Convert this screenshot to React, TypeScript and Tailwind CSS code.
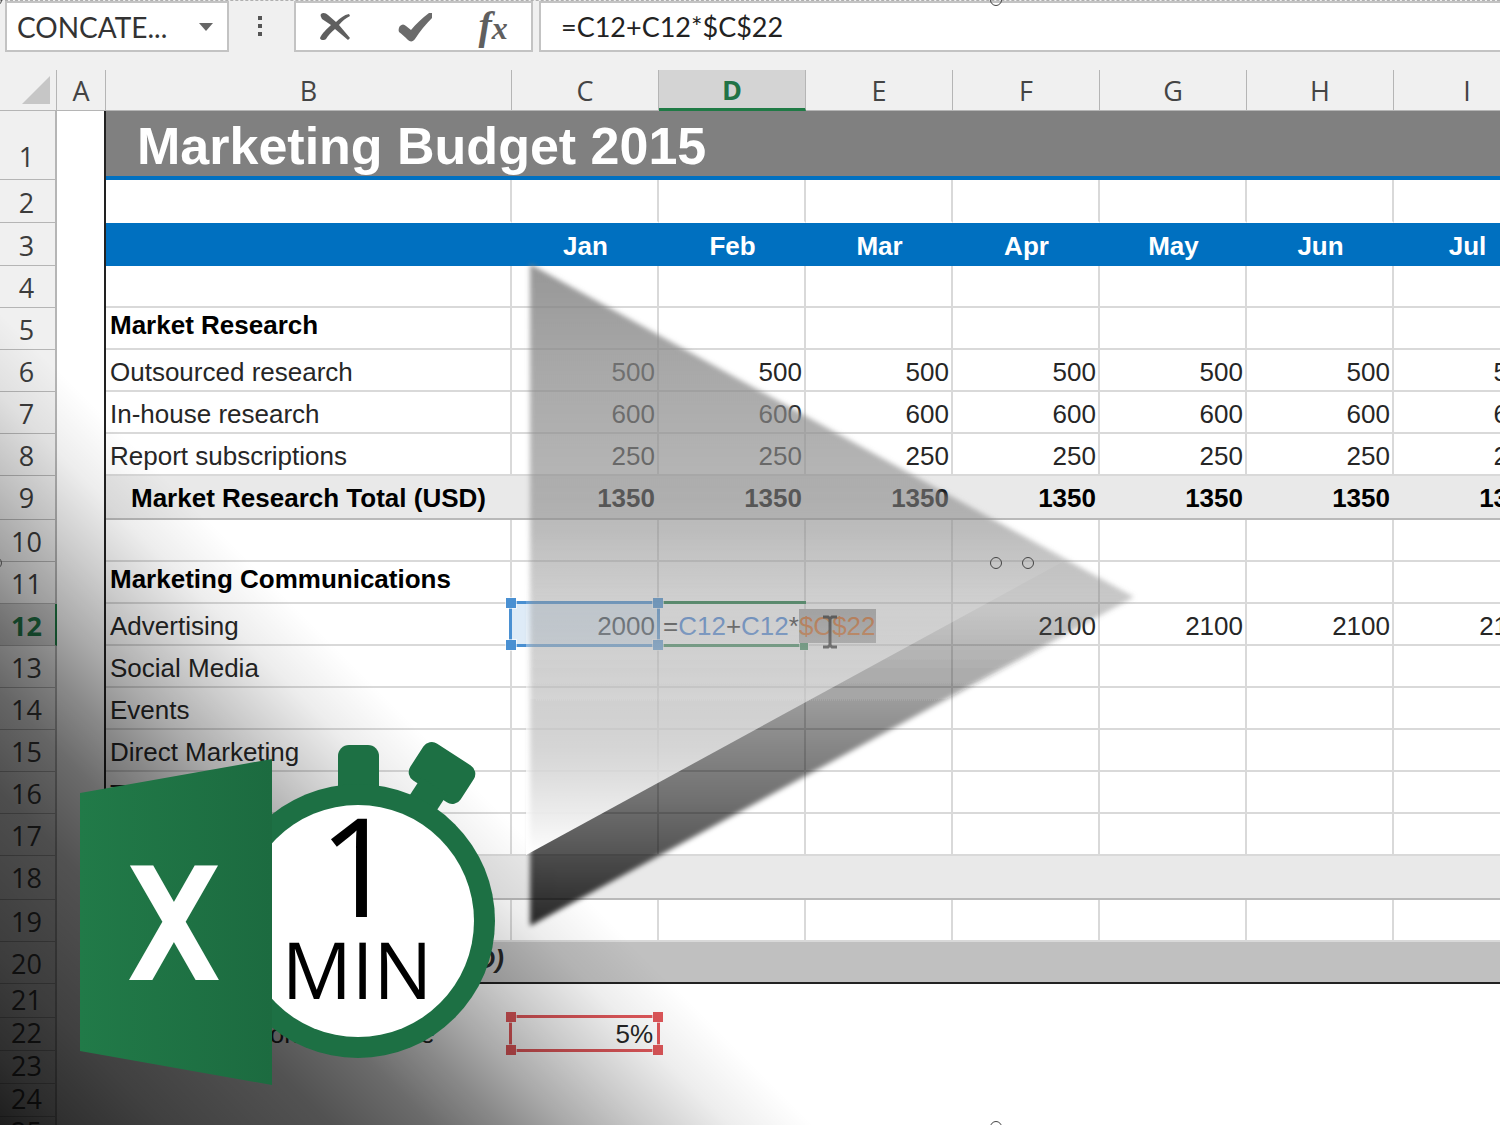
import clsx from "clsx";

type Row = {
  n: number;
  height: string;
  label?: string;
  values?: string[];
  kind?: "title" | "months" | "total" | "grand" | "plain" | "heading";
};

const MONTHS = ["Jan", "Feb", "Mar", "Apr", "May", "Jun", "Jul"];
const COLUMNS = ["A", "B", "C", "D", "E", "F", "G", "H", "I"];

const fill = (value: string) => MONTHS.map(() => value);

const ROWS: Row[] = [
  { n: 1, height: "h-[69px]", kind: "title", label: "Marketing Budget 2015" },
  { n: 2, height: "h-[43px]" },
  { n: 3, height: "h-[43px]", kind: "months", values: MONTHS },
  { n: 4, height: "h-[42px]" },
  { n: 5, height: "h-[42px]", kind: "heading", label: "Market Research" },
  { n: 6, height: "h-[42px]", label: "Outsourced research", values: fill("500") },
  { n: 7, height: "h-[42px]", label: "In-house research", values: fill("600") },
  { n: 8, height: "h-[42px]", label: "Report subscriptions", values: fill("250") },
  {
    n: 9,
    height: "h-[44px]",
    kind: "total",
    label: "Market Research Total (USD)",
    values: fill("1350"),
  },
  { n: 10, height: "h-[42px]" },
  { n: 11, height: "h-[42px]", kind: "heading", label: "Marketing Communications" },
  {
    n: 12,
    height: "h-[42px]",
    label: "Advertising",
    values: ["2000", "", "", "2100", "2100", "2100", "2100"],
  },
  { n: 13, height: "h-[42px]", label: "Social Media" },
  { n: 14, height: "h-[42px]", label: "Events" },
  { n: 15, height: "h-[42px]", label: "Direct Marketing" },
  { n: 16, height: "h-[42px]", label: "Trade Shows" },
  { n: 17, height: "h-[42px]" },
  { n: 18, height: "h-[44px]", kind: "total" },
  { n: 19, height: "h-[42px]" },
  { n: 20, height: "h-[42px]", kind: "grand", label: "(USD)" },
  { n: 21, height: "h-[34px]", kind: "plain" },
  {
    n: 22,
    height: "h-[33px]",
    kind: "plain",
    label: "Communication % increase",
    values: ["5%", "", "", "", "", "", ""],
  },
  { n: 23, height: "h-[33px]", kind: "plain" },
  { n: 24, height: "h-[33px]", kind: "plain" },
  { n: 25, height: "h-[33px]", kind: "plain" },
];

function FormulaBar() {
  return (
    <div className="flex h-[70px] items-start border-t border-dashed border-[#b0b0b0] bg-[#f0f0f0] pl-[5px] font-[Lato,sans-serif] text-[27px] leading-8">
      <div className="relative h-[51px] w-[224px] border-2 border-[#c3c3c3] bg-white">
        <select
          aria-label="Name box"
          className="h-full w-full appearance-none pl-2.5 text-[28px] text-[#333] outline-none"
        >
          <option>CONCATE...</option>
        </select>
        <svg
          className="pointer-events-none absolute top-5 right-3.5 h-2 w-3.5"
          viewBox="0 0 14 8"
          fill="#666"
        >
          <path d="M0 0h14L7 8z" />
        </svg>
      </div>
      <svg className="mt-3.5 ml-[29px] h-6 w-1" viewBox="0 0 4 24" fill="#555">
        <path d="M0 1h4v4H0zM0 9h4v4H0zM0 17h4v4H0z" />
      </svg>
      <div className="ml-8 flex h-[51px] w-[239px] items-center border-2 border-[#c3c3c3] bg-white">
        <button type="button" aria-label="Cancel" className="flex w-20 justify-center">
          <svg className="h-8 w-8" viewBox="0 0 32 32" fill="#5f5f5f">
            <path d="M1 3C3 1 6 2 8 4l8 7c4-4 8-7 13-8l1 2c-4 2-8 5-11 9l11 13-2 2-13-11c-4 3-7 7-9 10-2 2-6 1-6-1 2-5 7-9 11-13L2 8C1 6 0 4 1 3z" />
          </svg>
        </button>
        <button type="button" aria-label="Enter" className="flex w-20 justify-center">
          <svg className="h-8 w-9" viewBox="0 0 36 32" fill="#6b6b6b">
            <path d="M3 15c2-2 4-2 6 0l5 4C19 13 25 7 32 2h3v5C29 13 23 20 18 28c-2 3-5 3-7 1-3-3-6-6-9-8-1-2 0-5 1-6z" />
          </svg>
        </button>
        <button
          type="button"
          aria-label="Insert function"
          className="flex w-[76px] items-baseline justify-center font-['Liberation_Serif',serif] leading-10 font-bold text-[#5f5f5f] italic"
        >
          <span className="text-[40px]">f</span>
          <span className="text-[32px]">x</span>
        </button>
      </div>
      <input
        aria-label="Formula"
        defaultValue="=C12+C12*$C$22"
        className="ml-1.5 h-[51px] min-w-0 flex-1 border-2 border-r-0 border-[#c3c3c3] bg-white pl-5 text-[#222] outline-none"
      />
    </div>
  );
}

// Coloured frame with square grips on the corners of a referenced cell
function CellRange({ className, grip }: { className: string; grip: string }) {
  return (
    <span className={clsx("pointer-events-none absolute border-[3px]", className)}>
      <i className={clsx("absolute -top-1.5 -left-1.5 size-2.5 outline outline-white/60", grip)} />
      <i className={clsx("absolute -top-1.5 -right-1.5 size-2.5 outline outline-white/60", grip)} />
      <i className={clsx("absolute -bottom-1.5 -left-1.5 size-2.5 outline outline-white/60", grip)} />
      <i className={clsx("absolute -right-1.5 -bottom-1.5 size-2.5 outline outline-white/60", grip)} />
    </span>
  );
}

function EditedCell() {
  return (
    <>
      <span className="absolute -top-[3px] -right-0.5 -bottom-[3px] left-1 z-10 border-y-[3px] border-[#1f7a45]" />
      <i className="absolute -right-1 -bottom-1.5 z-10 size-2 bg-[#1f7a45] outline outline-white/60" />
      <span className="absolute bottom-[3px] left-1 z-10 whitespace-nowrap">
        =<span className="text-[#3f7fd8]">C12</span>+
        <span className="text-[#3f7fd8]">C12</span>*
        <span className="bg-[#a6a6a6] py-0.5 text-[#c85a10]">$C$22</span>
      </span>
      <svg
        className="absolute top-2.5 left-[163px] z-20 h-9 w-4"
        viewBox="0 0 16 36"
        fill="none"
        stroke="#111"
        strokeWidth="3"
      >
        <path d="M1 3h5l2 2 2-2h5M8 4v28M1 33h5l2-2 2 2h5" />
      </svg>
    </>
  );
}

function SheetRow({ row }: { row: Row }) {
  const active = row.n === 12;
  const gridded = !row.kind || row.kind === "heading";
  const edge = clsx(
    "border-b-2",
    row.kind === "plain" && "border-transparent",
    row.kind === "months" && "border-[#0070c0]",
    row.kind === "total" && "border-[#b9b9b9]",
    row.kind === "grand" && "border-[#222]",
    gridded && row.n !== 2 && "border-[#d9d9d9]",
    row.n === 2 && "border-r-[#d9d9d9] border-b-white"
  );

  return (
    <tr
      className={clsx(
        row.height,
        row.kind === "months" && "bg-[#0070c0] font-bold text-white",
        row.kind === "total" && "bg-[#e9e9e9] font-bold text-black",
        row.kind === "heading" && "text-black",
        row.kind === "grand" && "bg-[#c0c0c0] font-bold italic"
      )}
    >
      <th
        scope="row"
        className={clsx(
          "border-r-2 border-b border-[#b5b5b5] pr-0.5 align-bottom font-['Open_Sans',sans-serif] text-[27px] leading-[26px] not-italic",
          active
            ? "border-r-[#1f7a45] bg-[#d4d4d4] font-bold text-[#217346]"
            : "bg-[#f0f0f0] font-normal text-[#3c3c3c]",
          row.kind === "title" && "pb-[9px]",
          row.kind === "total" && "pb-2",
          row.kind === "plain" && "pb-1",
          row.kind !== "title" && row.kind !== "total" && row.kind !== "plain" && "pb-1.5"
        )}
      >
        {row.n}
      </th>
      <td className={clsx("border-r-2 bg-white", row.n < 21 ? "border-[#222]" : "border-transparent")} />
      {row.kind === "title" ? (
        <td
          colSpan={9}
          className="border-b-4 border-[#0070c0] bg-[#808080] pt-1 pl-[31px] align-middle text-[52px] leading-[60px] font-bold text-white"
        >
          {row.label}
        </td>
      ) : (
        <>
          <td
            className={clsx(
              edge,
              "align-bottom whitespace-nowrap",
              row.kind === "heading" && "pb-2 pl-1 font-bold",
              row.kind === "total" && "pb-[5px] pl-[25px]",
              row.kind === "grand" && "pr-2 pb-2 text-right",
              row.kind === "plain" && "pl-3",
              !row.kind && "pb-[3px] pl-1",
              gridded && "border-r-2"
            )}
          >
            {row.label}
          </td>
          {MONTHS.map((month, i) => (
            <td
              key={month}
              className={clsx(
                edge,
                "relative align-bottom",
                gridded && "border-r-2 pr-0.5 pb-[3px] text-right",
                row.kind === "months" && "pb-[3px] text-center",
                row.kind === "total" && "pr-1 pb-[5px] text-right",
                row.kind === "plain" && "pr-1.5 text-right"
              )}
            >
              {active && i === 0 && (
                <CellRange
                  className="-inset-[3px] z-20 border-[#4a90d2] bg-[#5b9bd5]/20"
                  grip="bg-[#4a90d2]"
                />
              )}
              {active && i === 1 ? <EditedCell /> : row.values?.[i]}
              {row.n === 22 && i === 0 && (
                <CellRange
                  className="-top-[3px] -right-px -bottom-[3px] -left-[3px] border-[#e0575a]"
                  grip="bg-[#e0575a]"
                />
              )}
            </td>
          ))}
          <td className={edge} />
        </>
      )}
    </tr>
  );
}

function Sheet() {
  return (
    <table className="w-[1541px] min-w-full table-fixed border-separate border-spacing-0 bg-white font-['Liberation_Sans',sans-serif] text-[26px] leading-[30px] text-[#262626]">
      <colgroup>
        <col className="w-[57px]" />
        <col className="w-[49px]" />
        <col className="w-[406px]" />
        {MONTHS.map((month) => (
          <col key={month} className="w-[147px]" />
        ))}
        <col />
      </colgroup>
      <thead>
        <tr className="h-[41px] bg-[#f0f0f0] font-['Open_Sans',sans-serif] text-[27px] leading-[34px]">
          <th className="border-r border-b border-[#b5b5b5]" aria-label="Select all">
            <svg className="mr-1.5 ml-auto size-7" viewBox="0 0 28 28" fill="#c6c6c6">
              <path d="M28 0v28H0z" />
            </svg>
          </th>
          {COLUMNS.map((letter) => (
            <th
              key={letter}
              scope="col"
              className={clsx(
                "border-r pt-0.5",
                letter === "D"
                  ? "border-r-[#b5b5b5] border-b-[3px] border-b-[#1f7a45] bg-[#d4d4d4] font-bold text-[#217346]"
                  : "border-b border-[#b5b5b5] font-normal text-[#444]"
              )}
            >
              {letter}
            </th>
          ))}
          <th className="border-b border-[#b5b5b5]" />
        </tr>
      </thead>
      <tbody>
        {ROWS.map((row) => (
          <SheetRow key={row.n} row={row} />
        ))}
      </tbody>
    </table>
  );
}

function PlayTriangle() {
  return (
    <svg
      className="pointer-events-none absolute top-[250px] left-[510px] z-30 h-[690px] w-[650px]"
      viewBox="510 250 650 690"
    >
      <defs>
        <linearGradient id="shadow" gradientUnits="userSpaceOnUse" x1="0" y1="264" x2="0" y2="926">
          <stop offset="0" stopColor="#808080" stopOpacity="0.82" />
          <stop offset="0.16" stopColor="#8a8a8a" stopOpacity="0.74" />
          <stop offset="0.36" stopColor="#8c8c8c" stopOpacity="0.62" />
          <stop offset="0.45" stopColor="#858585" stopOpacity="0.5" />
          <stop offset="0.51" stopColor="#707070" stopOpacity="0.38" />
          <stop offset="0.58" stopColor="#404040" stopOpacity="0.38" />
          <stop offset="0.66" stopColor="#101010" stopOpacity="0.39" />
          <stop offset="0.735" stopColor="#000" stopOpacity="0.48" />
          <stop offset="0.81" stopColor="#000" stopOpacity="0.56" />
          <stop offset="0.885" stopColor="#000" stopOpacity="0.66" />
          <stop offset="1" stopColor="#000" stopOpacity="0.84" />
        </linearGradient>
        <linearGradient id="face" gradientUnits="userSpaceOnUse" x1="0" y1="264" x2="0" y2="855">
          <stop offset="0.45" stopColor="#fff" stopOpacity="0" />
          <stop offset="0.57" stopColor="#fff" stopOpacity="0.14" />
          <stop offset="0.65" stopColor="#fff" stopOpacity="0.36" />
          <stop offset="0.74" stopColor="#fff" stopOpacity="0.53" />
          <stop offset="0.82" stopColor="#fff" stopOpacity="0.66" />
          <stop offset="0.91" stopColor="#fff" stopOpacity="0.84" />
          <stop offset="1" stopColor="#fff" />
        </linearGradient>
        <filter id="soft" x="-5%" y="-5%" width="110%" height="110%">
          <feGaussianBlur stdDeviation="2.5" />
        </filter>
      </defs>
      <path d="M530 264V926L1134 597z" fill="url(#shadow)" filter="url(#soft)" />
      <path d="M526 264V855L1066 560z" fill="url(#face)" />
    </svg>
  );
}

function ExcelMinuteLogo() {
  return (
    <svg
      className="pointer-events-none absolute top-[735px] left-[75px] z-40 h-[355px] w-[430px]"
      viewBox="75 735 430 355"
      role="img"
      aria-label="Excel 1 MIN"
    >
      <defs>
        <linearGradient id="door">
          <stop offset="0" stopColor="#217a48" />
          <stop offset="1" stopColor="#1c6b40" />
        </linearGradient>
      </defs>
      <g fill="#1d7044">
        <rect x="338" y="745" width="41" height="60" rx="11" />
        <g transform="translate(442 773) rotate(33)">
          <rect x="-30" y="-22" width="60" height="44" rx="10" />
          <rect x="-15" y="15" width="31" height="40" />
        </g>
        <circle cx="358" cy="921" r="137" />
      </g>
      <circle cx="358" cy="921" r="116" fill="#fff" />
      <path d="M80 793L272 759V1085L80 1051z" fill="url(#door)" />
      <text
        x="174"
        y="980"
        textAnchor="middle"
        className="fill-white font-['DejaVu_Sans_Mono',monospace] text-[156px] font-bold"
      >
        X
      </text>
      <g className="fill-black font-['Open_Sans',sans-serif]" textAnchor="middle">
        <text x="358" y="917" className="text-[138px]">
          1
        </text>
        <text x="357" y="999" className="text-[78px]">
          MIN
        </text>
      </g>
    </svg>
  );
}

// Round grips left by the drawing selection
function Grip({ className }: { className: string }) {
  return (
    <i
      className={clsx(
        "pointer-events-none absolute z-40 size-3 rounded-full border border-[#444]",
        className
      )}
    />
  );
}

export default function App() {
  return (
    <div className="relative h-screen overflow-hidden bg-white">
      <FormulaBar />
      <Sheet />
      <div className="pointer-events-none absolute bottom-0 left-0 z-20 size-[830px] bg-[linear-gradient(45deg,rgba(0,0,0,0.88)_0%,rgba(0,0,0,0.81)_4%,rgba(0,0,0,0.75)_10%,rgba(0,0,0,0.68)_20%,rgba(0,0,0,0.58)_26%,rgba(0,0,0,0.47)_30%,rgba(0,0,0,0.34)_34%,rgba(0,0,0,0.2)_39%,rgba(0,0,0,0.07)_44%,rgba(0,0,0,0)_49%)]" />
      <PlayTriangle />
      <ExcelMinuteLogo />
      <Grip className="top-[557px] left-[990px]" />
      <Grip className="top-[557px] left-[1022px]" />
      <Grip className="-top-1.5 left-[990px]" />
      <Grip className="-bottom-2 left-[990px]" />
      <Grip className="top-[557px] -left-2.5" />
      <Grip className="-top-1.5 -left-2.5" />
    </div>
  );
}
